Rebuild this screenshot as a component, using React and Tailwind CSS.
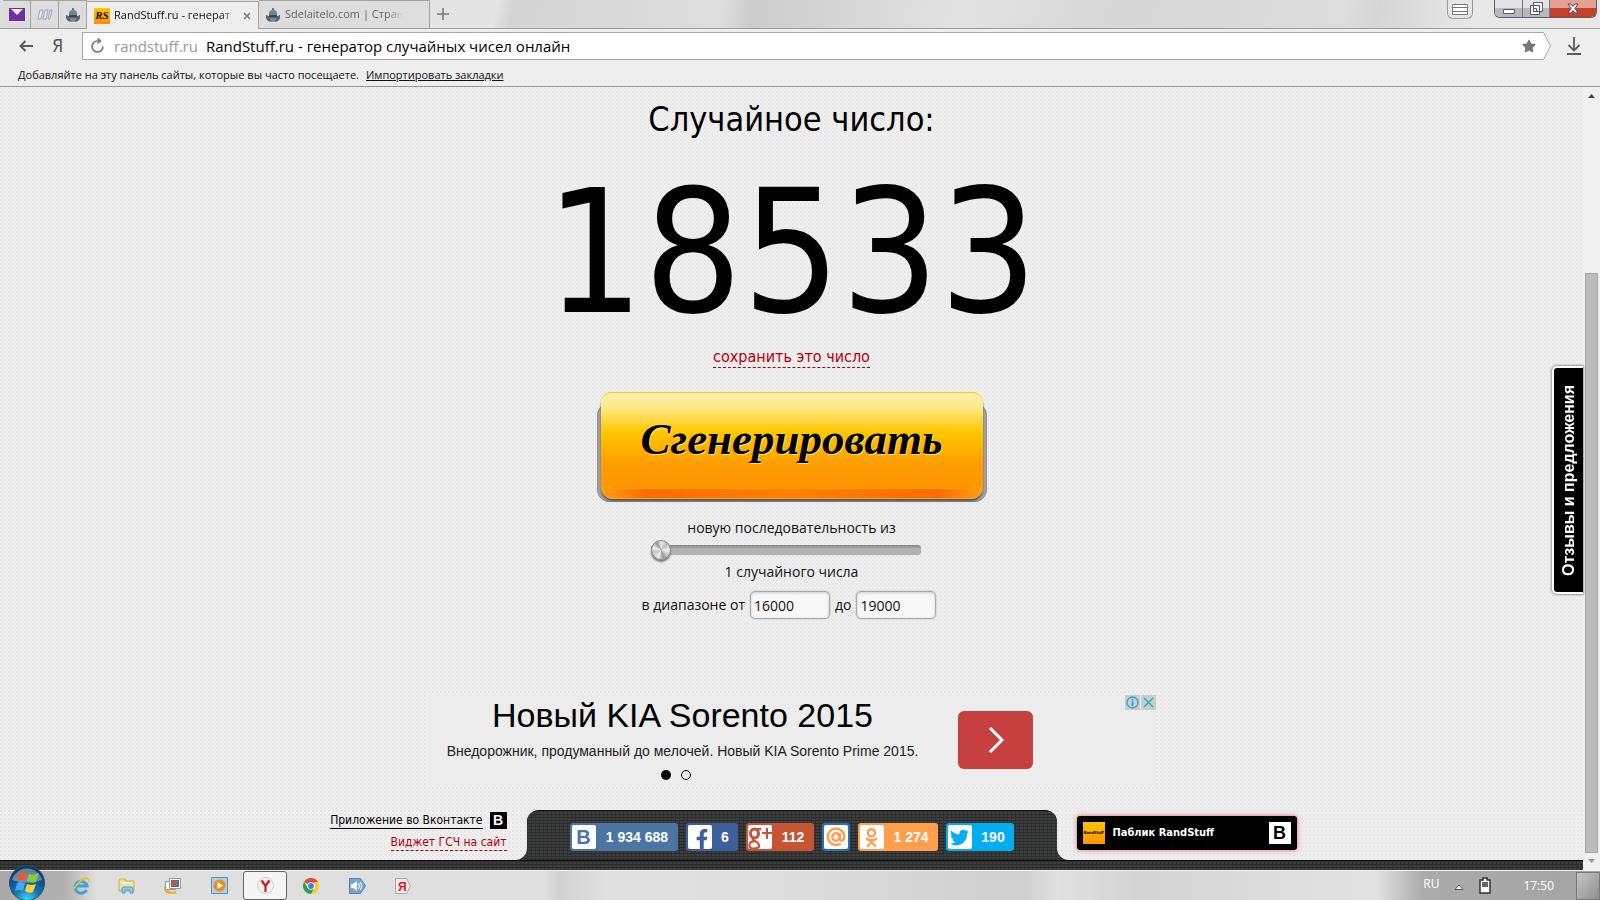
import { useState } from 'react';
import { FaFacebookF, FaTwitter, FaOdnoklassniki, FaStar } from 'react-icons/fa';

const TAHOMA = "font-['DejaVu_Sans_Condensed','DejaVu_Sans',sans-serif]";
const SEGOE = "font-['Open_Sans','Noto_Sans',sans-serif]";
const ARIAL = "font-['Liberation_Sans',sans-serif]";
const PAPER = 'bg-[#f0f0f0] bg-[image:radial-gradient(circle_at_1px_1px,#e6e6e6_1px,transparent_1px),radial-gradient(circle_at_3px_3px,#ebebeb_1px,transparent_1px)] bg-[size:4px_4px]';
const CARBON = 'bg-[#3c3e3e] bg-[image:linear-gradient(#2a2b2b_1px,transparent_1px),linear-gradient(90deg,#303131_1px,transparent_1px)] bg-[size:4px_3px]';

function RobotIcon() {
  return (
    <svg width="16" height="16" viewBox="0 0 16 16" className="shrink-0">
      <path d="M7 1h2v3H7z" fill="#6b7780" />
      <path d="M4 6q0-3 4-3t4 3v2H4z" fill="#76838b" />
      <path d="M1 8q7 3 14 0v3q-1 4-7 4t-7-4z" fill="#59646b" />
      <path d="M4 8h8v2H4z" fill="#3d474d" />
      <path d="M5 12h6M6 14h4" stroke="#a5b0b7" />
    </svg>
  );
}

function PinnedTab({ label, children }) {
  return (
    <button aria-label={label} className="w-7 h-7 flex items-center justify-center border-r border-t border-[#a2a2a2] bg-[#dcdcdc]/80">
      {children}
    </button>
  );
}

function TabStrip() {
  return (
    <div className="h-[29px] flex items-end border-b border-[#9d9d9d] bg-[linear-gradient(100deg,#dedede_0%,#e4e4e4_31%,#d4d4d4_32%,#dedede_45%,#cccccc_47%,#e2e2e2_60%,#d6d6d6_70%,#dddddd_84%,#d5d5d5_86%,#e8e8e8_92%)]">
      <div className="flex shrink-0 pl-[3px]">
        <PinnedTab label="Почта">
          <svg width="16" height="13" viewBox="0 0 16 13">
            <path d="M0 0h16v13H0z" fill="#6a32a0" />
            <path d="M2 1h12L8 7z" fill="#f0eaf6" />
          </svg>
        </PinnedTab>
        <PinnedTab label="Метрика">
          <svg width="16" height="12" viewBox="0 0 16 12" fill="none">
            <path d="M1 10L3 1h3L4 10zM6 10L8 1h3L9 10zM11 10l2-9h2l-2 9z" fill="#e9edf4" stroke="#98a4b8" />
          </svg>
        </PinnedTab>
        <PinnedTab label="Sdelaitelo"><RobotIcon /></PinnedTab>
      </div>
      <div className="w-[172px] h-7 -mb-px shrink-0 flex items-center px-[7px] border-t border-r border-[#a2a2a2] bg-[#eeeeee]">
        <span className="w-4 h-4 flex items-center justify-center text-[11px] font-bold italic bg-linear-to-b from-[#ffc800] to-[#ff8a00] font-['Liberation_Serif',serif]">RS</span>
        <span className="ml-1 flex-1 whitespace-nowrap text-[11px] mask-r-from-85%">RandStuff.ru - генерат</span>
        <button aria-label="Закрыть вкладку" className="ml-1">
          <svg width="8" height="8" viewBox="0 0 8 8" stroke="#7d7d7d" strokeWidth="1.6"><path d="M1 1l6 6M7 1L1 7" /></svg>
        </button>
      </div>
      <div className="w-[171px] h-7 shrink-0 flex items-center pl-1.5 border-t border-r border-[#a2a2a2] bg-[#dcdcdc]/80">
        <RobotIcon />
        <span className="ml-1 whitespace-nowrap text-[11px] text-[#666666] mask-r-from-85%">Sdelaitelo.com | Стран</span>
      </div>
      <button aria-label="Новая вкладка" className="w-[26px] h-7 flex items-center justify-center">
        <svg width="12" height="12" viewBox="0 0 12 12" stroke="#777777" strokeWidth="1.6"><path d="M6 0v12M0 6h12" /></svg>
      </button>
      <div className="flex-1" />
      <button aria-label="Меню" className="w-[26px] h-[19px] mr-[21px] self-start flex items-center justify-center border border-t-0 border-[#999999] rounded-b-md bg-[#e6e6e6]">
        <svg width="16" height="11" viewBox="0 0 16 11"><path d="M.5.5h15v3H.5zM.5 3.500h15v4H.5zM.5 7.500h15v3H.5z" fill="#ffffff" stroke="#777777" /></svg>
      </button>
      <div className="self-start flex h-[18px] mr-[3px] border border-t-0 border-[#5a5b6b] rounded-b-md overflow-hidden">
        <button aria-label="Свернуть" className="w-7 flex items-center justify-center bg-linear-to-b from-[#e4e4e6] from-50% to-[#b9b9bd] to-50% border-r border-[#77778a]">
          <svg width="12" height="10" viewBox="0 0 12 10"><path d="M.5 5.500h11v4H.5z" fill="#ffffff" stroke="#55566f" /></svg>
        </button>
        <button aria-label="Восстановить" className="w-[27px] flex items-center justify-center bg-linear-to-b from-[#e4e4e6] from-50% to-[#b9b9bd] to-50% border-r border-[#77778a]">
          <svg width="13" height="13" viewBox="0 0 13 13" fill="#ffffff" stroke="#55566f"><path d="M3.500.5h9v9h-9zM.5 3.500h9v9h-9zM3.500 6.500h3v3h-3z" /></svg>
        </button>
        <button aria-label="Закрыть" className="w-[46px] flex items-center justify-center bg-linear-to-b from-[#e2a193] from-45% to-[#c5402a] to-50%">
          <svg width="12" height="11" viewBox="0 0 12 11"><path d="M1 1h3l2 2.500L8 1h3L8 5.500l3 4.500H8L6 7.500 4 10H1l3-4.500z" fill="#ffffff" stroke="#55405a" /></svg>
        </button>
      </div>
    </div>
  );
}

function AddressBar() {
  return (
    <div className="h-[34px] pt-[3px] flex items-start">
      <button aria-label="Назад" className="w-[14px] h-[28px] ml-[19px] flex items-center">
        <svg width="14" height="12" viewBox="0 0 14 12" fill="none" stroke="#5c5c5c" strokeWidth="2"><path d="M14 6H1M6.500 1L1.500 6l5 5" /></svg>
      </button>
      <button className={`w-[49px] h-[28px] text-lg leading-[28px] text-[#555555] ${TAHOMA}`}>Я</button>
      <div className="flex-1 h-[28px] flex items-center border border-r-0 border-[#a9a9a9] bg-white pl-[7px] whitespace-nowrap">
        <svg width="15" height="16" viewBox="0 0 15 16" fill="none" stroke="#777777" strokeWidth="1.6">
          <path d="M13 8.500a5.500 5.500 0 1 1-5.500-5.500H10" /><path d="M7.500 .5l3 2.500-3 2.500" />
        </svg>
        <span className="ml-[9px] text-[15px] text-[#999999]">randstuff.ru</span>
        <input aria-label="Адрес" defaultValue="RandStuff.ru - генератор случайных чисел онлайн" className="ml-2 flex-1 min-w-0 text-[15px] text-black outline-none" />
        <button aria-label="В закладки" className="mr-1.5"><FaStar size={14} color="#777777" /></button>
      </div>
      <svg width="9" height="28" viewBox="0 0 9 28"><path d="M0 .5h1.500l7 13.500-7 13.500H0" fill="#ffffff" stroke="#a9a9a9" /></svg>
      <button aria-label="Загрузки" className="w-[14px] h-[28px] mr-[19px] ml-4 flex items-center">
        <svg width="14" height="18" viewBox="0 0 14 18" fill="none" stroke="#5c5c5c" strokeWidth="1.800"><path d="M7 0v13M1.500 8L7 13.500 12.500 8M0 17h14" /></svg>
      </button>
    </div>
  );
}

function GenerateButton() {
  return (
    <button className="relative mt-6 w-[390px] px-1 pb-[3px] before:absolute before:inset-x-0 before:top-[11px] before:bottom-0 before:rounded-[12px] before:bg-[#a3a3a3] before:border before:border-[#8d8d8d]">
      <span className="relative block rounded-[12px] pb-[9px] bg-[linear-gradient(90deg,#ff9d10,#ff6a00_12%,#ff8000_50%,#ff6a00_88%,#ff9d10)] border-b border-[#ffa51e] shadow-[0_2px_2px_#555555]">
        <span className="block h-[97px] pt-[18px] rounded-[11px] border-t border-b border-t-[#ffd000] border-b-[#ffa800] bg-[linear-gradient(#fff0b0,#ffe98a_15%,#ffc800_41%,#ff9d00_75%,#ff9400)] text-[45px] leading-[56px] font-bold italic text-black text-shadow-[1px_1px_0_#ffe27a] font-['Liberation_Serif',serif]">
          Сгенерировать
        </span>
      </span>
    </button>
  );
}

function RangeForm() {
  const [count, setCount] = useState(1);
  const box = 'w-20 h-7 px-[3px] rounded-[5px] border border-[#aaaaaa] bg-[#f8f8f8] shadow-[inset_0_1px_3px_#cccccc,0_0_0_1px_#dddddd] text-sm outline-none';

  return (
    <form className={`mt-4 flex flex-col items-center text-sm leading-5 ${SEGOE}`}>
      <label htmlFor="count">новую последовательность из</label>
      <input
        id="count"
        type="range"
        min="1"
        max="10"
        value={count}
        onChange={e => setCount(e.target.value)}
        className="w-[270px] h-5 mt-0.5 mr-[10px] appearance-none bg-transparent [&::-webkit-slider-runnable-track]:h-[10px] [&::-webkit-slider-runnable-track]:rounded-[3px] [&::-webkit-slider-runnable-track]:bg-linear-to-b [&::-webkit-slider-runnable-track]:from-[#858585] [&::-webkit-slider-runnable-track]:to-[#b2b2b2] [&::-webkit-slider-runnable-track]:to-40% [&::-webkit-slider-thumb]:appearance-none [&::-webkit-slider-thumb]:w-5 [&::-webkit-slider-thumb]:h-5 [&::-webkit-slider-thumb]:-mt-[5px] [&::-webkit-slider-thumb]:rounded-full [&::-webkit-slider-thumb]:border [&::-webkit-slider-thumb]:border-[#888888] [&::-webkit-slider-thumb]:shadow-[0_2px_2px_#777777] [&::-webkit-slider-thumb]:bg-[conic-gradient(#eeeeee,#bbbbbb_12%,#eeeeee_25%,#cccccc_35%,#999999_45%,#eeeeee_55%,#c4c4c4_70%,#eeeeee_80%,#999999_92%,#eeeeee)]"
      />
      <p className="mt-0.5">{count} случайного числа</p>
      <div className="mt-[9px] flex items-center mr-[5px]">
        <label htmlFor="from" className="mr-[5px]">в диапазоне от</label>
        <input id="from" defaultValue="16000" className={box} />
        <label htmlFor="to" className="mx-[5px]">до</label>
        <input id="to" defaultValue="19000" className={box} />
      </div>
    </form>
  );
}

function Banner() {
  return (
    <section className={`mt-[76px] w-[728px] h-[90px] flex bg-[#ececec] ${ARIAL}`}>
      <div className="w-[510px] flex flex-col items-center">
        <h2 className="text-[34px] leading-[40px] text-black">Новый KIA Sorento 2015</h2>
        <p className="mt-[6px] text-[14px] leading-5 text-[#222222]">Внедорожник, продуманный до мелочей. Новый KIA Sorento Prime 2015.</p>
        <div className="mt-[9px] mr-[13px] flex gap-[10px]">
          <button aria-label="1" className="w-[10px] h-[10px] rounded-full bg-black" />
          <button aria-label="2" className="w-[10px] h-[10px] rounded-full border border-black" />
        </div>
      </div>
      <button aria-label="Перейти" className="mt-4 ml-5 w-[75px] h-[58px] rounded-md bg-[#c6403f] flex items-center justify-center">
        <svg width="17" height="26" viewBox="0 0 17 26" fill="none" stroke="#ffffff" strokeWidth="3"><path d="M3 1l12 12L3 25" /></svg>
      </button>
      <div className="ml-auto flex gap-px">
        <button aria-label="О рекламе" className="w-[15px] h-[15px] bg-[#cccccc] flex items-center justify-center">
          <svg width="13" height="13" viewBox="0 0 13 13" fill="none" stroke="#18aecb"><circle cx="6.500" cy="6.500" r="5.500" strokeWidth="1.300" /><path d="M6.500 3v1.500M6.500 5.500V10" strokeWidth="1.800" /></svg>
        </button>
        <button aria-label="Закрыть рекламу" className="w-[15px] h-[15px] bg-[#cccccc] flex items-center justify-center">
          <svg width="11" height="11" viewBox="0 0 11 11" stroke="#18aecb" strokeWidth="1.400"><path d="M1 1l9 9M10 1l-9 9" /></svg>
        </button>
      </div>
    </section>
  );
}

function Share({ label, color, width, count, children }) {
  return (
    <button aria-label={label} className={`h-7 p-0.5 flex items-center rounded-[3px] ${width} ${color}`}>
      <span className="w-6 h-6 shrink-0 rounded-[2px] bg-white flex items-center justify-center">{children}</span>
      {count && <span className="flex-1 pl-[3px] text-center whitespace-nowrap text-sm font-bold text-white">{count}</span>}
    </button>
  );
}

function Footer() {
  return (
    <footer className={CARBON}>
      <div className="flex h-[50px]">
        <div className={`flex-1 flex flex-col items-end pr-5 text-xs leading-4 rounded-br-[12px] ${PAPER}`}>
          <div className="flex items-center gap-[7px] mt-0.5">
            <a href="#vk" className="text-black border-b border-black leading-[15px]">Приложение во Вконтакте</a>
            <span className={`w-[17px] h-[17px] bg-black text-white text-sm leading-[17px] text-center font-bold ${ARIAL}`}>B</span>
          </div>
          <a href="#widget" className="mt-[5px] text-[#b10009] border-b border-dashed border-[#b10009]">Виджет ГСЧ на сайт</a>
        </div>
        <div className={`w-[530px] ${PAPER}`}>
          <div className={`h-[50px] pt-3 flex justify-center gap-2 rounded-t-[12px] border-t border-[#111111] ${CARBON} ${ARIAL}`}>
            <Share label="ВКонтакте" color="bg-[#4c75a3]" width="w-[108px]" count="1 934 688">
              <span className="text-xl font-bold text-[#4c75a3]">B</span>
            </Share>
            <Share label="Facebook" color="bg-[#3f5f9c]" width="w-[52px]" count="6">
              <FaFacebookF size={20} color="#3f5f9c" className="mt-1 ml-1" />
            </Share>
            <Share label="Google+" color="bg-[#c55435]" width="w-[68px]" count="112">
              <svg width="24" height="24" viewBox="0 0 24 24" fill="none" stroke="#c55435">
                <ellipse cx="6.500" cy="8.500" rx="4" ry="4.500" strokeWidth="3" />
                <path d="M8 4h5" strokeWidth="2" />
                <path d="M5 13q-1 2 2 3t4 4-4.500 3.500T1.500 20t5-3.500" strokeWidth="2.200" />
                <path d="M19 3v11M14 8h10" strokeWidth="2" />
              </svg>
            </Share>
            <Share label="Мой мир" color="bg-[#2372bd]" width="w-7">
              <svg width="20" height="20" viewBox="0 0 20 20" fill="none" stroke="#ff9e4a" strokeWidth="2.400">
                <circle cx="10" cy="10" r="3.700" />
                <path d="M13.700 6v5.500q.3 2.500 2.500 2t2-4.500a8.200 8.200 0 1 0-3.500 7.500" />
              </svg>
            </Share>
            <Share label="Одноклассники" color="bg-[#ff9e4d]" width="w-20" count="1 274">
              <FaOdnoklassniki size={19} color="#ff9e4d" />
            </Share>
            <Share label="Twitter" color="bg-[#00aeef]" width="w-[68px]" count="190">
              <FaTwitter size={19} color="#00aeef" />
            </Share>
          </div>
        </div>
        <div className={`flex-1 pl-5 pt-[6px] rounded-bl-[12px] ${PAPER}`}>
          <a href="#public" className="w-[220px] h-[34px] px-[6px] flex items-center rounded-[3px] bg-black text-white text-[11px] font-bold shadow-[0_0_5px_#e06a6a]">
            <span className="w-[22px] h-[22px] flex items-center justify-center bg-linear-to-b from-[#ffc400] to-[#ff9500] text-[4px] italic text-black">RandStuff</span>
            <span className="ml-2">Паблик RandStuff</span>
            <span className={`ml-auto w-[22px] h-[22px] bg-white text-black text-lg leading-[22px] text-center ${ARIAL}`}>B</span>
          </a>
        </div>
      </div>
      <div className="h-[10px] border-t border-[#111111]" />
    </footer>
  );
}

function Scrollbar() {
  return (
    <div className="w-[17px] shrink-0 flex flex-col items-center bg-[#f0f0f0] pt-[7px] pb-[7px]">
      <svg width="7" height="4" viewBox="0 0 7 4"><path d="M0 4l3.500-4L7 4z" fill="#444444" /></svg>
      <div className="flex-[175]" />
      <div className="flex-[580] w-[13px] bg-[#bcbcbc] border border-[#a6a6a6]" />
      <svg className="mt-[6px]" width="7" height="4" viewBox="0 0 7 4"><path d="M0 0l3.500 4L7 0z" fill="#999999" /></svg>
    </div>
  );
}

const launchers = [
  {
    name: 'Internet Explorer',
    icon: (
      <svg width="18" height="18" viewBox="0 0 18 18" fill="none">
        <path d="M14.500 13a6 6 0 1 1 .5-4H5" stroke="#3fa4dc" strokeWidth="3" />
        <path d="M1.500 16C-1 12 12-2 16.500 2q1 1 0 3" stroke="#f2bf24" strokeWidth="1.600" />
      </svg>
    ),
  },
  {
    name: 'Проводник',
    icon: (
      <svg width="18" height="16" viewBox="0 0 18 16">
        <path d="M1 2q0-1 1-1h5l1 2h7q1 0 1 1v9H1z" fill="#f2df91" stroke="#c9ac4f" />
        <path d="M3 5h11" stroke="#ffffff" />
        <path d="M4 15v-4q0-2 2-2h7q2 0 2 2v4h-3v-3H7v3z" fill="#8ecdf0" stroke="#4d9ccb" />
      </svg>
    ),
  },
  {
    name: 'Фотографии',
    icon: (
      <svg width="18" height="17" viewBox="0 0 18 17">
        <path d="M1 9a7 7 0 0 0 11 6" fill="none" stroke="#f0b23c" strokeWidth="3" />
        <path d="M1.500 4.500h10v8h-10z" fill="#ffffff" stroke="#999999" />
        <path d="M5.500 1.500h11v10h-11z" fill="#ffffff" stroke="#999999" />
        <path d="M7 3h8v7H7z" fill="#3279c2" /><circle cx="10.500" cy="6.500" r="2.800" fill="#e2511d" />
      </svg>
    ),
  },
  {
    name: 'Проигрыватель',
    icon: (
      <svg width="17" height="17" viewBox="0 0 17 17">
        <path d="M.5.5h16v16H.5z" fill="#a8d3ee" stroke="#578fb5" />
        <circle cx="8.500" cy="8.500" r="6" fill="#f08a18" /><path d="M6.500 5l5.500 3.500-5.500 3.500z" fill="#ffffff" />
      </svg>
    ),
  },
  {
    name: 'Яндекс.Браузер',
    active: true,
    icon: (
      <svg width="17" height="17" viewBox="0 0 17 17">
        <circle cx="8.500" cy="8.500" r="8" fill="#f4f4f4" stroke="#cccccc" />
        <path d="M4.500 3.500l4 5.500 4-5.500M8.500 8.500V15" fill="none" stroke="#d8161e" strokeWidth="2.200" />
      </svg>
    ),
  },
  {
    name: 'Chrome',
    icon: (
      <svg width="16" height="16" viewBox="0 0 16 16">
        <path d="M8 8L1.070 4a8 8 0 0 1 13.860 0z" fill="#dd4b3e" />
        <path d="M8 8V4h6.930A8 8 0 0 1 8 16z" fill="#fccb34" />
        <path d="M8 8l3 2-3 6A8 8 0 0 1 1.070 4L5 10z" fill="#2ba24c" />
        <path d="M4.500 6L8 4h3v4H6z" fill="#dd4b3e" />
        <circle cx="8" cy="8" r="3.800" fill="#ffffff" /><circle cx="8" cy="8" r="2.900" fill="#3f7ee8" />
      </svg>
    ),
  },
  {
    name: 'Звук',
    icon: (
      <svg width="17" height="16" viewBox="0 0 17 16">
        <path d="M.5.500h11l5 7.500-5 7.500H.5z" fill="#76a5d2" stroke="#5a82a8" />
        <path d="M2 6h2l4-3v10l-4-3H2z" fill="#ffffff" /><path d="M9.500 5q2 3 0 6M11.500 4q2.500 4 0 8" fill="none" stroke="#ffffff" />
      </svg>
    ),
  },
  {
    name: 'Яндекс',
    icon: (
      <svg width="17" height="16" viewBox="0 0 17 16">
        <path d="M.5.500h11l4 7.500-4 7.500H.5z" fill="#ececec" stroke="#a8a8a8" />
        <text x="3" y="13" fontSize="12" fontWeight="bold" fill="#e21b1b" fontFamily="Liberation Sans">Я</text>
      </svg>
    ),
  },
];

function Taskbar() {
  return (
    <nav className="h-[30px] flex items-stretch border-t border-[#f2f2f2] bg-[linear-gradient(90deg,#aaaaaa_0%,#b0b0b0_4%,#dfdfdf_6%,#dfdfdf_34%,#d2d2d2_35%,#e0e0e0_38%,#dcdcdc_50%,#cfcfcf_64%,#e0e0e0_66%,#d4d4d4_71%,#e2e2e2_86%,#ababab_89%,#a4a4a4_100%)]">
      <button aria-label="Пуск" className="relative z-10 w-9 h-9 ml-[9px] -mt-[6px] shrink-0">
        <svg width="36" height="36" viewBox="0 0 36 36">
          <defs>
            <radialGradient id="orb" cx=".5" cy="1" r=".9">
              <stop offset="0" stopColor="#3fe4ff" /><stop offset=".4" stopColor="#1774b4" /><stop offset="1" stopColor="#0e3a66" />
            </radialGradient>
          </defs>
          <circle cx="18" cy="18" r="17.500" fill="url(#orb)" stroke="#27506e" />
          <path d="M3 15a15.500 15.500 0 0 1 30 0q-15 5-30 0z" fill="#ffffff" opacity=".35" />
          <path d="M10 9q4-3 8-1l-2 8q-4-2-8 0z" fill="#ee5a24" />
          <path d="M20 9q4 2 10-1l-3 9q-4 2-9-1z" fill="#8cc63f" />
          <path d="M8 18q4-2 8 0l-2 8q-4-2-8 0z" fill="#3fa9f5" />
          <path d="M18 19q4 2 9 0l-3 8q-4 2-8-1z" fill="#ffcf33" />
        </svg>
      </button>
      <div className="flex ml-[14px] gap-[2px]">
        {launchers.map(l => (
          <button
            key={l.name}
            aria-label={l.name}
            className={l.active ? 'w-11 flex items-center justify-center rounded-[3px] border border-[#666666] bg-[#f5f5f5]' : 'w-11 flex items-center justify-center'}
          >
            {l.icon}
          </button>
        ))}
      </div>
      <div className="ml-auto flex items-center text-white">
        <span className="text-xs leading-4 mb-1">RU</span>
        <svg className="ml-[15px] mt-0.5" width="10" height="6" viewBox="0 0 10 6"><path d="M1 5.500L5 1l4 4.500z" fill="#ffffff" stroke="#555555" /></svg>
        <svg className="ml-[15px]" width="12" height="17" viewBox="0 0 12 17">
          <path d="M4 1h4v2h3v13H1V3h3z" fill="#ffffff" stroke="#333333" strokeWidth="1.500" /><path d="M3 5h6v5H3z" fill="#666666" />
        </svg>
        <time className="ml-8 text-xs">17:50</time>
        <button aria-label="Свернуть все окна" className="ml-[22px] w-6 h-7 border border-[#777777] bg-linear-to-br from-[#c6c6c6] to-[#8f8f8f]" />
      </div>
    </nav>
  );
}

export default function App() {
  return (
    <div className={`min-h-screen flex flex-col overflow-hidden text-[#111111] ${SEGOE}`}>
      <header className="h-[87px] bg-[#eeeeee] border-b border-[#999999]">
        <TabStrip />
        <AddressBar />
        <p className="pl-[18px] text-[11px] leading-[23px]">
          Добавляйте на эту панель сайты, которые вы часто посещаете.
          <a href="#import" className="ml-[7px] underline">Импортировать закладки</a>
        </p>
      </header>

      <div className="flex-1 flex">
        <div className={`relative flex-1 flex flex-col ${PAPER} ${TAHOMA}`}>
          <main className="flex-1 flex flex-col items-center pt-[10px] pb-6">
            <h1 className="text-[34px] leading-[44px] text-black">Случайное число:</h1>
            <output className="mt-5 text-[172px] leading-[184px] text-black">18533</output>
            <a href="#save" className="mt-0.5 text-base leading-5 text-[#b10009] border-b border-dashed border-[#b10009]">сохранить это число</a>
            <GenerateButton />
            <RangeForm />
            <Banner />
          </main>
          <Footer />
          <button className={`absolute right-0 top-[279px] w-[31px] h-[228px] rounded-l-[5px] border-2 border-r-0 border-white bg-black text-white text-base font-bold shadow-[0_0_2px_1px_#999999] flex items-center justify-center ${ARIAL}`}>
            <span className="[writing-mode:vertical-rl] rotate-180 whitespace-nowrap">Отзывы и предложения</span>
          </button>
        </div>
        <Scrollbar />
      </div>

      <Taskbar />
    </div>
  );
}
